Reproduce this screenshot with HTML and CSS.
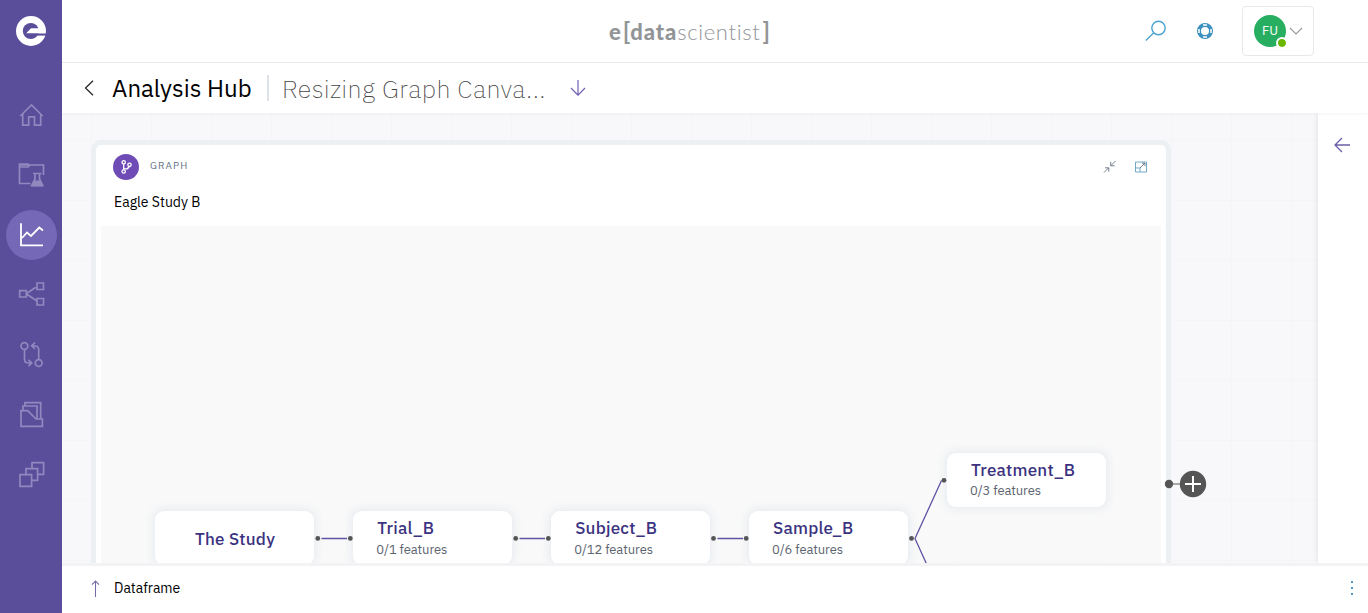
FILE: index.html
```html
<!DOCTYPE html>
<html lang="en">
<head>
<meta charset="utf-8">
<title>Analysis Hub</title>
<link rel="stylesheet" href="styles.css">
</head>
<body>
<div class="app">
  <nav class="sidebar">
    <svg class="logo" viewBox="0 0 30 30"><circle cx="15" cy="15" r="15" fill="#fff"/><circle cx="14.800" cy="15" r="8" fill="#5a4e9a"/><path d="M10 17.500L15 12.200H24V17.500Z" fill="#fff"/><path d="M10 17.500H30V19.600H10Z" fill="#5a4e9a"/></svg>
    <a class="nav-item"><svg viewBox="0 0 50 50"><path d="M14.300 26L25.500 15L36.700 26M16.700 24V35.200H22.700V26.800H28.500V35.200H34.700V24"/></svg></a>
    <a class="nav-item"><svg viewBox="0 0 50 50"><path d="M24.500 33.500H13.500V15H37.500V25M13.500 14H22L23.500 15.500L22 17H13.500Z"/><path d="M27 23.500H35.500M29 24V29L25.800 35.500H36.700L33.500 29V24"/><path class="solid" d="M28 30.500H34.500L37.500 36.500H25Z"/></svg></a>
    <a class="nav-item active"><svg viewBox="0 0 50 50"><path d="M15 13.300V35.300H37M16 28L21 22.500L25 26L33.300 17.500L37 20.500"/></svg></a>
    <a class="nav-item"><svg viewBox="0 0 50 50"><path d="M13.700 20.700h6.600v6.300h-6.600zM31 13h6.500v6.500h-6.500zM31 28.500h6.500v6.500h-6.500zM20.500 23.500L31 16.500M20.500 24L31 31"/></svg></a>
    <a class="nav-item"><svg viewBox="0 0 50 50"><circle cx="18.400" cy="16" r="3.400"/><circle cx="32.700" cy="33" r="3.400"/><path d="M18.500 19.500V29Q18.500 33 22.500 33H25.500M22.500 29.800L25.700 33L22.500 36.200M32.700 29.500V20Q32.700 16 29 16H26M29 12.600L25.700 15.800L29 19"/></svg></a>
    <a class="nav-item"><svg viewBox="0 0 50 50"><path d="M15 20.700H21.700L30 29H36.400V36.300H15ZM17 20.500V16H31V28.500M19 15.500V12.700H34.700V28.500"/></svg></a>
    <a class="nav-item"><svg viewBox="0 0 50 50"><path d="M26 18.500V12.700H37.600V24.300H31.700M20 24.500V18.700H31.600V30.300H25.700M14 24.700h11.600v11.600h-11.600z"/></svg></a>
  </nav>
  <div class="main">
    <header class="topbar">
      <div class="brand"><b>e</b><span class="bracket">[</span><b class="data">data</b><span class="light">scientist</span><span class="bracket">]</span></div>
      <div class="tools">
        <svg class="search" viewBox="0 0 22 22"><circle cx="13.500" cy="8" r="6.700"/><path d="M8.800 12.800L.8 20.600"/></svg>
        <svg class="help" viewBox="0 0 18 18"><circle cx="9" cy="9" r="6" fill="none" stroke="#3d91bf" stroke-width="4"/><path d="M7 3H11M7 15H11M3 7V11M15 7V11" stroke="#fff" stroke-width="1.500"/></svg>
        <div class="user"><div class="avatar">FU<i class="status"></i></div><svg class="chev" viewBox="0 0 14 9"><path d="M1 1L7 7L13 1"/></svg></div>
      </div>
    </header>
    <div class="titlebar">
      <svg class="back" viewBox="0 0 10 16"><path d="M9 .8L1.500 8L9 15.200"/></svg>
      <h1 class="hub">Analysis Hub</h1>
      <h2 class="project">Resizing Graph Canva...</h2>
      <svg class="arrow" viewBox="0 0 16 16"><path d="M8 0V15M1 8L8 15.200L15 8"/></svg>
    </div>
    <div class="workspace">
      <div class="canvas">
        <section class="card">
          <div class="card-head">
            <svg class="badge" viewBox="0 0 26 26"><circle cx="13" cy="13" r="13" fill="#6f4bb5"/><g fill="none" stroke="#fff" stroke-width="1.300"><circle cx="10.700" cy="8.300" r="1.700"/><circle cx="10.700" cy="17.500" r="1.700"/><circle cx="16.500" cy="10.800" r="1.700"/><path d="M10.700 10V15.700M10.700 14.800H13Q15.500 14.800 16 12.500"/></g></svg>
            <span class="kind">GRAPH</span>
            <svg class="mini shrink" viewBox="0 0 14 14"><path d="M12.500 1L8 5.500M7.700 1.800V5.800H11.700M1 12.500L5.500 8M2 7.800H5.800V11.600"/></svg>
            <svg class="mini expand" viewBox="0 0 14 14"><path class="frame" d="M1.500 2H12.500V12H1.500ZM1.500 8H6V12"/><path d="M6 8L11 3M8 3.200H11V6.200"/></svg>
          </div>
          <div class="card-title">Eagle Study B</div>
          <div class="graph">
            <div class="node root n-study"><b>The Study</b></div>
            <div class="node n-trial"><b>Trial_B</b><small>0/1 features</small></div>
            <div class="node n-subject"><b>Subject_B</b><small>0/12 features</small></div>
            <div class="node n-sample"><b>Sample_B</b><small>0/6 features</small></div>
            <div class="node n-treatment"><b>Treatment_B</b><small>0/3 features</small></div>
            <div class="node n-next"></div>
            <svg class="edges" viewBox="0 0 1060 420"><path d="M220.500 312.500H246M418.500 312.500H444M616.500 312.500H642M840.500 254.500L814 312.500L840.500 371"/><g class="ports"><circle cx="216.800" cy="312.400" r="2.400"/><circle cx="249.300" cy="312.400" r="2.400"/><circle cx="414.700" cy="312.400" r="2.400"/><circle cx="447.300" cy="312.400" r="2.400"/><circle cx="612.500" cy="312.400" r="2.400"/><circle cx="645.200" cy="312.400" r="2.400"/><circle cx="810.500" cy="312.400" r="2.400"/><circle cx="843" cy="254.300" r="2.400"/></g></svg>
          </div>
        </section>
        <svg class="add" viewBox="0 0 44 28"><path d="M5 14H18" stroke="#aaa" stroke-width="2"/><circle cx="5" cy="14" r="4.200" fill="#555"/><circle cx="29" cy="14" r="13.200" fill="#555"/><path d="M21 14H37M29 6V22" stroke="#fff" stroke-width="2"/></svg>
      </div>
      <aside class="panel"><svg class="left" viewBox="0 0 16 16"><path d="M16 8H1M8 1L1 8L8 15"/></svg></aside>
    </div>
    <footer class="footer">
      <svg class="up" viewBox="0 0 8 16"><path d="M4 16V1M.7 4.300L4 1L7.300 4.300"/></svg>
      <span class="frame-label">Dataframe</span>
      <svg class="dots" viewBox="0 0 2 14"><path d="M0 0h2v2H0zM0 6h2v2H0zM0 12h2v2H0z"/></svg>
    </footer>
  </div>
</div>
</body>
</html>
```
FILE: styles.css
```css
* { box-sizing: border-box; }
body { margin: 0; font-family: "IBM Plex Sans", Roboto, sans-serif; background: #fff; color: #000; overflow: hidden; }
svg { display: block; flex: none; fill: none; }
.app { display: flex; width: 1368px; height: 613px; }
.sidebar { width: 62px; background: #5a4e9a; display: flex; flex-direction: column; gap: 10px; padding: 16px 0 0 6px; }
.logo { width: 30px; height: 30px; margin: 0 0 34px 10px; }
.nav-item { width: 51px; height: 50px; border-radius: 50%; }
.nav-item svg { width: 50px; height: 50px; stroke: #9188bf; stroke-width: 1.7; }
.nav-item .solid { fill: #9188bf; stroke: none; }
.active { background: #7568b6; }
.nav-item.active svg { stroke: #fff; stroke-width: 1.8; }
.main { width: 1306px; display: flex; flex-direction: column; }
.topbar { height: 63px; border-bottom: 1px solid #ececee; display: flex; justify-content: space-between; }
.brand { margin: 17px 0 0 547px; font: 22px/29px Lato, sans-serif; color: #929597; display: flex; white-space: nowrap; }
.brand b { font-weight: 900; }
.brand .data { letter-spacing: .9px; }
.brand .bracket { font-weight: 700; font-size: 24px; line-height: 27px; margin: 0 0 0 2px; }
.brand .light { font-weight: 300; letter-spacing: .65px; }
.tools { display: flex; padding: 6px 54px 0 0; }
.search { width: 22px; height: 22px; margin: 14px 29px 0 0; stroke: #4da3d0; stroke-width: 1.4; }
.help { width: 18px; height: 18px; margin: 16px 28px 0 0; }
.user { width: 72px; height: 50px; border: 1px solid #e8e8ea; border-radius: 4px; display: flex; align-items: center; padding-left: 11px; gap: 3px; }
.avatar { width: 32px; height: 32px; border-radius: 50%; background: #27ae60; color: #fff; font-size: 13px; line-height: 32px; text-align: center; position: relative; }
.status { position: absolute; right: -2px; bottom: -2px; width: 12px; height: 12px; border: 2px solid #fff; border-radius: 50%; background: #6bb700; background-clip: padding-box; }
.chev { width: 14px; height: 9px; stroke: #999; stroke-width: 1.1; }
.titlebar { height: 50px; display: flex; align-items: center; padding-left: 22px; position: relative; z-index: 2; background: #fff; box-shadow: 0 1px 3px #0000000c; }
.back { width: 10px; height: 16px; stroke: #222; stroke-width: 1.2; margin-right: 18px; }
.hub { margin: 0; width: 157px; font-size: 24px; line-height: 26px; font-weight: 400; border-right: 2px solid #dfe2e6; white-space: nowrap; }
.project { margin: 2px 0 0 13px; width: 288px; font-size: 25px; line-height: 28px; font-weight: 200; letter-spacing: .43px; color: #444; white-space: nowrap; }
.arrow { width: 16px; height: 16px; stroke: #7161b2; stroke-width: 1.2; }
.workspace { height: 450px; display: flex; overflow: hidden; }
.canvas { width: 1256px; padding: 27px 0 0 29px; display: flex; align-items: flex-start; background-color: #f8f8fa; background-image: linear-gradient(90deg, #f5f5f7 1px, transparent 1px), linear-gradient(#f5f5f6 1px, transparent 1px); background-size: 60px 60px; background-position: 29px 27px; }
.card { width: 1080px; height: 500px; flex: none; border: 5px solid #ecf0f3; border-radius: 10px; background: #fff; }
.card-head { display: flex; align-items: center; padding: 9px 18px 0 17px; height: 35px; }
.badge { width: 26px; height: 26px; }
.kind { margin: 0 auto 2px 11px; font-size: 10px; line-height: 14px; letter-spacing: 1.1px; color: #667085; }
.mini { width: 14px; height: 14px; stroke: #667080; stroke-width: .9; }
.shrink { margin-right: 17px; }
.frame { stroke: #649ec4; }
.card-title { padding: 13px 0 0 18px; height: 46px; font-size: 14px; line-height: 18px; }
.graph { width: 1060px; height: 414px; margin-left: 5px; background: #f9f9f9; position: relative; overflow: hidden; }
.edges { position: absolute; inset: 0; width: 1060px; height: 420px; stroke: #6053a4; stroke-width: 1.3; }
.ports { fill: #555; stroke: none; }
.node { position: absolute; top: 285.4px; width: 159px; height: 54px; border-radius: 9px; background: #fff; box-shadow: 0 0 8px 3px #e9edf1; padding: 6.5px 0 0 24px; color: #3b3280; }
.node b { display: block; font-size: 17px; line-height: 20px; font-weight: 500; letter-spacing: .22px; }
.node small { display: block; margin: 4px 0 0 -1px; font-size: 13px; line-height: 16px; letter-spacing: -.08px; color: #5c6470; }
.n-study { left: 54.4px; }
.node.root { padding: 17.5px 0 0 39.6px; }
.n-trial { left: 252.3px; }
.n-subject { left: 450.2px; }
.n-sample { left: 648px; }
.n-treatment { left: 846px; top: 227.4px; }
.n-treatment small { margin-top: 3px; }
.n-next { left: 846px; top: 343.5px; }
.add { width: 44px; height: 28px; margin: 330px 0 0 -7px; position: relative; }
.panel { width: 50px; background: #fff; padding: 24px 0 0 16px; box-shadow: 0 0 6px #0000001c; position: relative; }
.left { width: 16px; height: 16px; stroke: #6a5fa8; stroke-width: 1.3; }
.footer { height: 50px; border-top: 3px solid #f3f3f5; display: flex; align-items: center; padding: 0 15px 3px 29px; }
.up { width: 9px; height: 17px; stroke: #766ba8; stroke-width: 1; }
.frame-label { margin: 0 auto 1px 14px; font-size: 14px; line-height: 18px; }
.dots { width: 2px; height: 14px; fill: #4598c8; }
```
